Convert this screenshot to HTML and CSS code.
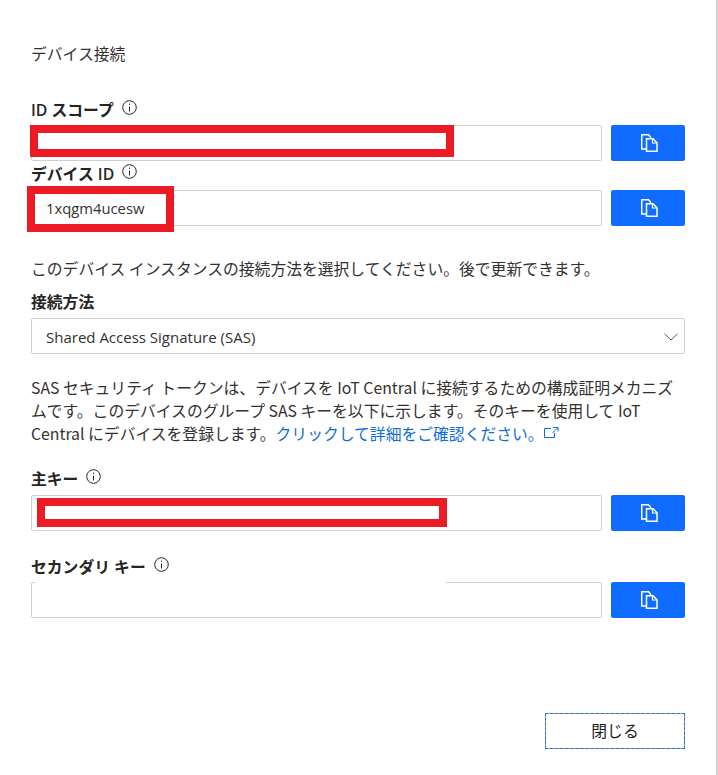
FILE: index.html
```html
<!DOCTYPE html>
<html lang="ja">
<head>
  <meta charset="UTF-8" />
  <meta name="viewport" content="width=device-width, initial-scale=1.0" />
  <title>デバイス接続</title>
  <link rel="stylesheet" href="styles.css">
</head>
<body>
  <svg width="0" height="0" class="defs">
    <symbol id="copy" viewBox="0 0 17 18">
      <path d="M5.500 15H.7V.7h6.800l2.500 3" fill="none" stroke="currentColor" stroke-width="1.500"/>
      <path d="M5.500 4.700h6.500l4 4v8.600H5.500z" fill="#0f6cff" stroke="currentColor" stroke-width="1.500"/>
      <path d="M11.500 4.700v4.300h4.500" fill="none" stroke="currentColor" stroke-width="1.200"/>
    </symbol>
    <symbol id="info" viewBox="0 0 15 15">
      <circle cx="7.500" cy="7.500" r="6.800" fill="none" stroke="currentColor" stroke-width="1"/>
      <path d="M7.500 6.500v5M7.500 3.600v1.300" fill="none" stroke="currentColor" stroke-width="1"/>
    </symbol>
  </svg>

  <main class="panel">
    <h1>デバイス接続</h1>

    <label class="label label-scope">ID スコープ <svg class="info"><use href="#info"/></svg></label>
    <div class="row">
      <div class="field">
        <input type="text" class="text-input" aria-label="ID スコープ">
        <span class="redact redact-scope"></span>
      </div>
      <button class="copy-button" aria-label="コピー"><svg class="copy"><use href="#copy"/></svg></button>
    </div>

    <label class="label label-device">デバイス ID <svg class="info"><use href="#info"/></svg></label>
    <div class="row">
      <div class="field">
        <input type="text" class="text-input" value="1xqgm4ucesw" aria-label="デバイス ID">
        <span class="redact redact-device"></span>
      </div>
      <button class="copy-button" aria-label="コピー"><svg class="copy"><use href="#copy"/></svg></button>
    </div>

    <p class="hint">このデバイス インスタンスの接続方法を選択してください。後で更新できます。</p>

    <label class="label label-method">接続方法</label>
    <div class="select">
      <span>Shared Access Signature (SAS)</span>
      <svg class="chevron" viewBox="0 0 14 8"><path d="M.5.8 7 7 13.500.8" fill="none" stroke="currentColor" stroke-width="1"/></svg>
    </div>

    <p class="desc">SAS セキュリティ トークンは、デバイスを IoT Central に接続するための構成証明メカニズムです。このデバイスのグループ SAS キーを以下に示します。そのキーを使用して IoT Central にデバイスを登録します。<a href="#" class="link">クリックして詳細をご確認ください。<svg class="external" viewBox="0 0 15 11"><path d="M7 1.500H.5v9h10V6M9 .5h5v4M14 .5 8.500 6" fill="none" stroke="currentColor" stroke-width="1"/></svg></a></p>

    <label class="label label-primary">主キー <svg class="info"><use href="#info"/></svg></label>
    <div class="row">
      <div class="field">
        <input type="text" class="text-input" aria-label="主キー">
        <span class="redact redact-primary"></span>
      </div>
      <button class="copy-button" aria-label="コピー"><svg class="copy"><use href="#copy"/></svg></button>
    </div>

    <label class="label label-secondary">セカンダリ キー <svg class="info"><use href="#info"/></svg></label>
    <div class="row">
      <div class="field">
        <input type="text" class="text-input" aria-label="セカンダリ キー">
        <span class="patch"></span>
      </div>
      <button class="copy-button" aria-label="コピー"><svg class="copy"><use href="#copy"/></svg></button>
    </div>

    <div class="footer">
      <button class="close-button">閉じる</button>
    </div>
  </main>
</body>
</html>
```

FILE: styles.css
```css
* {
  box-sizing: border-box;
}
body {
  margin: 0;
  background: white;
  color: #323130;
  font-family: "Open Sans", "Noto Sans CJK JP", sans-serif;
  font-size: 15px;
}
.defs {
  position: absolute;
}
.panel {
  width: 718px;
  height: 775px;
  padding: 43px 31px 0 31px;
  border-right: 2px solid #cfcfcf;
}
h1 {
  margin: 0;
  font-size: 15.800px;
  font-weight: 400;
  line-height: 22px;
}
.label {
  display: flex;
  align-items: center;
  gap: 8px;
  height: 22px;
  font-size: 15.800px;
  font-weight: 600;
  color: #252423;
}
.label-scope { margin-top: 33px; }
.label-device { margin-top: 1px; }
.label-method { margin-top: 10px; }
.label-primary { margin-top: 22px; }
.label-secondary { margin-top: 24px; }
.info {
  width: 15px;
  height: 15px;
  margin-top: -3px;
  flex: none;
}
.row {
  display: flex;
  gap: 9px;
  margin-top: 5px;
}
.label-device + .row { margin-top: 6px; }
.label-primary + .row { margin-top: 6px; }
.field {
  position: relative;
  flex: 1;
}
.text-input {
  display: block;
  width: 100%;
  height: 36px;
  padding: 0 14px;
  border: 1.500px solid #d2d0ce;
  border-radius: 2px;
  background: white;
  color: #323130;
  font-family: inherit;
  font-size: 14.800px;
}
.copy-button {
  display: flex;
  align-items: center;
  justify-content: center;
  width: 74px;
  height: 36px;
  padding: 0 0 0 2px;
  border: none;
  border-radius: 2px;
  background: #0f6cff;
  color: white;
}
.copy {
  width: 17px;
  height: 18px;
}
.redact {
  position: absolute;
  border: 8px solid #ed1c24;
}
.redact-scope {
  left: -1px;
  top: 0;
  width: 424px;
  height: 32px;
}
.redact-device {
  left: -4px;
  top: -4px;
  width: 147px;
  height: 46px;
}
.redact-primary {
  left: 6px;
  top: 3px;
  width: 410px;
  height: 29px;
}
.patch {
  position: absolute;
  left: 4px;
  top: 0;
  width: 411px;
  height: 2px;
  background: white;
}
.hint {
  margin: 0;
  margin-top: 32px;
  font-family: "Noto Sans CJK JP", sans-serif;
  font-size: 15.800px;
  line-height: 22px;
}
.select {
  display: flex;
  align-items: center;
  justify-content: space-between;
  height: 36px;
  margin-top: 6px;
  padding: 1px 6px 0 14px;
  border: 1.500px solid #d2d0ce;
  border-radius: 2px;
  font-size: 15px;
}
.chevron {
  width: 14px;
  height: 8px;
  color: #605e5c;
}
.desc {
  margin: 0;
  margin-top: 22px;
  font-family: "Noto Sans CJK JP", sans-serif;
  font-size: 15.800px;
  line-height: 23px;
}
.link {
  color: #0f6cdd;
  text-decoration: none;
}
.external {
  width: 15px;
  height: 11px;
  margin-left: 0;
  vertical-align: 2px;
}
.footer {
  display: flex;
  justify-content: flex-end;
  margin-top: 95px;
}
.close-button {
  width: 140px;
  height: 36px;
  padding: 0 0 2px;
  border: 1px solid #a0a0a0;
  outline: 1px dashed #1f6fe8;
  outline-offset: -1px;
  background: white;
  color: #201f1e;
  font-family: inherit;
  font-size: 15.800px;
}
```
